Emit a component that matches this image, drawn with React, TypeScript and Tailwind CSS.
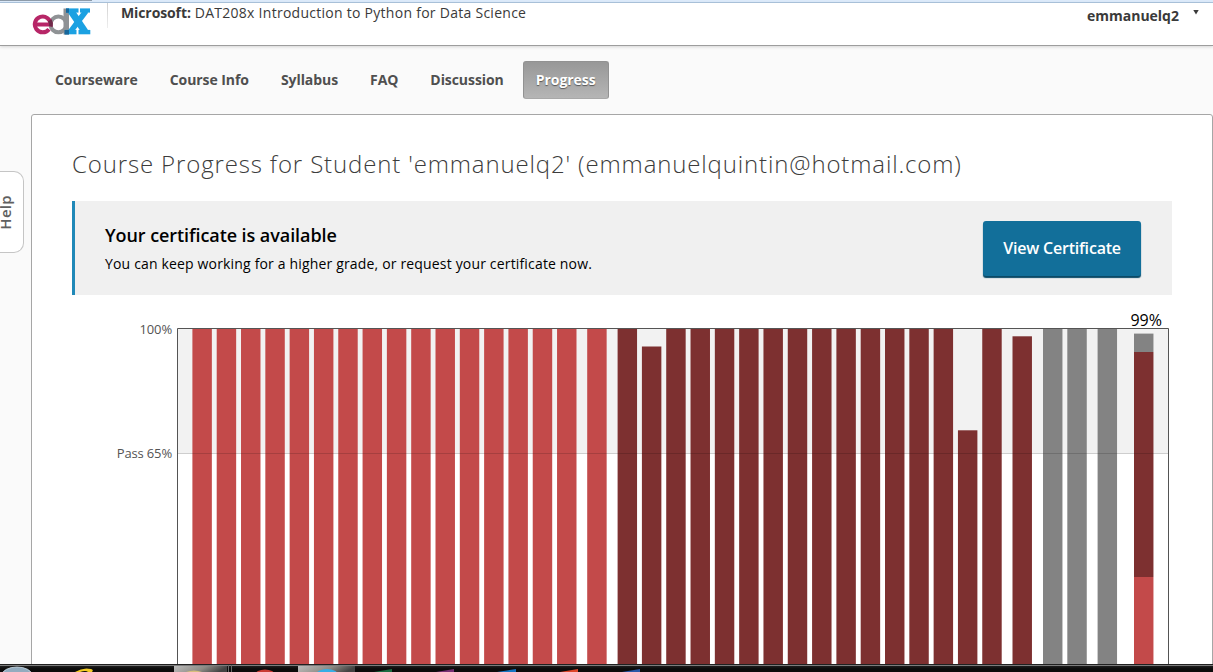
import React from "react";

type Bar = { x: number; top: number; bottom?: number; color: string };

const RED = "#c34a4a";
const MAROON = "#7d3030";
const GRAY = "#838383";
const STEP = 24.31;
const BAR_WIDTH = 19.45;
const CHART_TOP = 328;

const series = (start: number, count: number, color: string): Bar[] =>
  Array.from({ length: count }, (_, i) => ({ x: start + i * STEP, top: 328, color }));

const labs = series(617.6, 16, MAROON).map((bar, i) => ({
  ...bar,
  top: i === 1 ? 346.5 : i === 14 ? 430.3 : 328,
}));

const bars: Bar[] = [
  ...series(192.4, 16, RED),
  { x: 587.2, top: 328, color: RED },
  ...labs,
  { x: 1012.5, top: 336.3, color: MAROON },
  ...series(1043, 2, GRAY),
  { x: 1097.6, top: 328, color: GRAY },
  { x: 1134, top: 333.6, bottom: 352, color: GRAY },
  { x: 1134, top: 352, bottom: 577, color: MAROON },
  { x: 1134, top: 577, color: RED },
];

function Logo() {
  return (
    <svg className="block" width="60" height="28" viewBox="0 0 60 28" aria-label="edX">
      <g fill="none">
        <circle cx="26.4" cy="16.4" r="7.9" stroke="#8f9295" strokeWidth="4" />
        <rect x="31.5" y="0.5" width="5.5" height="26" fill="#8f9295" />
        <path d="M3.4 16.4H18.6A7.9 7.9 0 1 0 17 21.2" stroke="#b72667" strokeWidth="4" />
        <path d="M17.8 12.2A7.9 7.9 0 0 1 18.6 18.4" stroke="#6f2a49" strokeWidth="4" />
      </g>
      <g stroke="#1ba1e2" fill="none">
        <line x1="39" y1="3" x2="53" y2="23.6" strokeWidth="7" />
        <line x1="54" y1="3" x2="38.5" y2="23.6" strokeWidth="5.5" />
        <line x1="34" y1="2.5" x2="46.5" y2="2.5" strokeWidth="4.2" />
        <line x1="48" y1="2.5" x2="58" y2="2.5" strokeWidth="4.2" />
        <line x1="33" y1="24.1" x2="44.5" y2="24.1" strokeWidth="4.4" />
        <line x1="46.5" y1="24.1" x2="58.3" y2="24.1" strokeWidth="4.4" />
      </g>
      <path d="M34 0.5h3v4.2h-3zM32.5 22h4.5v4.4h-4.5z" fill="#17679b" />
    </svg>
  );
}

function Header() {
  return (
    <header className="h-[43px] shrink-0 bg-white border-b border-[#9d9d9d] shadow-[0_1px_3px_rgba(0,0,0,0.15)] flex items-start text-[#3a3a3a] z-10">
      <div className="ml-8 mt-[5px] w-[60px]"><Logo /></div>
      <div className="ml-[15px] w-px h-[25px] bg-linear-to-b from-[#d0d0d0] to-[#eeeeee]" />
      <div className="ml-[13px] text-[14px] leading-5 whitespace-nowrap tracking-[0.27px]">
        <span className="font-bold tracking-[-0.1px]">Microsoft:</span> DAT208x Introduction to Python for Data Science
      </div>
      <div className="ml-auto mt-[3px] text-[14px] leading-5 font-bold">emmanuelq2</div>
      <svg className="ml-[14px] mr-[14px] mt-[7px]" width="6" height="5" viewBox="0 0 6 5">
        <path d="M0.3 0h5.4L3 4.6z" fill="#3a3a3a" />
      </svg>
    </header>
  );
}

function Nav() {
  const tabs = ["Courseware", "Course Info", "Syllabus", "FAQ", "Discussion"];
  return (
    <nav className="h-[68px] shrink-0 pt-[15px] pl-[42px] flex gap-[6px] text-[14px] font-bold tracking-[-0.07px] text-[#4f4f4f]">
      {tabs.map((tab) => (
        <a key={tab} className="h-[38px] px-[13px] leading-[37px]">{tab}</a>
      ))}
      <a className="h-[38px] w-[86px] text-center leading-[35px] rounded-[3px] border border-[#929292] border-b-[#a8a8a8] bg-linear-to-b from-[#989898] to-[#b5b5b5] text-white [text-shadow:0_1px_1px_rgba(0,0,0,0.5)]">
        Progress
      </a>
    </nav>
  );
}

function Certificate() {
  return (
    <section className="ml-10 mr-10 mt-[19px] h-[94px] shrink-0 border-l-3 border-[#2089b8] bg-[#f0f0f0] flex justify-between text-black">
      <div className="pl-[30px] pt-[21px]">
        <h2 className="text-[18px] leading-[26px] font-semibold tracking-[-0.07px]">Your certificate is available</h2>
        <p className="mt-[6px] text-[14px] leading-5 tracking-[0.165px]">You can keep working for a higher grade, or request your certificate now.</p>
      </div>
      <button className="mt-5 mr-[31px] w-[158px] h-[55px] pb-[2px] rounded-[3px] bg-[#126f9a] shadow-[0_2px_1px_#0a4a67] text-white text-[16px] font-semibold tracking-[-0.2px]">
        View Certificate
      </button>
    </section>
  );
}

function Chart() {
  return (
    <section className="mt-[14px] flex h-[356px] shrink-0 text-[13px] leading-5 text-[#545454]">
      <div className="w-[140px] pt-[10px] text-right whitespace-nowrap tracking-[-0.15px]">
        <div>100%</div>
        <div className="mt-[104px]">Pass 65%</div>
      </div>
      <div className="ml-[5px] w-[993px]">
        <div className="h-[18px] pr-[8px] text-right text-[16px] leading-[22px] text-black">99%</div>
        <svg className="block" width="993" height="338" viewBox="177 327 993 338">
          <rect x="178" y="328" width="991" height="126" fill="#f2f2f2" />
          {bars.map((bar, i) => (
            <rect
              key={i}
              x={bar.x}
              y={bar.top}
              width={BAR_WIDTH}
              height={(bar.bottom ?? 665) - bar.top}
              fill={bar.color}
            />
          ))}
          <line x1="178" x2="1168" y1="453.5" y2="453.5" stroke="#000000" strokeOpacity="0.15" />
          <path d={`M177.5 665V${CHART_TOP + 0.5}H1168.5V665`} fill="none" stroke="#545454" />
        </svg>
      </div>
    </section>
  );
}

function Taskbar() {
  return (
    <footer className="h-2 shrink-0 z-10">
      <svg className="block" width="1213" height="8" viewBox="0 664 1213 8">
        <defs>
          <linearGradient id="active" x1="0" x2="1" y1="0" y2="0.2">
            <stop offset="0" stopColor="#bcbcbc" />
            <stop offset="0.6" stopColor="#8e8b85" />
            <stop offset="1" stopColor="#434343" />
          </linearGradient>
          <linearGradient id="shade" x1="0" x2="0" y1="0" y2="1">
            <stop offset="0" stopColor="#2b2b2b" />
            <stop offset="0.6" stopColor="#0b0b0b" />
          </linearGradient>
        </defs>
        <rect x="0" y="664" width="1213" height="8" fill="url(#shade)" />
        <rect x="0" y="664" width="1213" height="1" fill="#202020" />
        <rect x="0" y="665" width="1213" height="1" fill="#7c7c7c" />
        <ellipse cx="17" cy="675" rx="15" ry="8" fill="#93acbf" stroke="#d2dfe9" strokeWidth="0.8" />
        <path d="M75 672Q83 667 91 669Q94 670 92 672H88Q86 670 80 672z" fill="#f2cb27" />
        <path d="M174 672V666H227V672z" fill="url(#active)" />
        <path d="M228.5 672V665M231.5 672V665" stroke="#686868" />
        <path d="M186 672Q194 669 202 672" fill="#d6bd7c" />
        <ellipse cx="265" cy="675" rx="10" ry="5.5" fill="#c93a33" />
        <path d="M298 672V666H355V672z" fill="url(#active)" />
        <ellipse cx="327" cy="675" rx="11" ry="6" fill="#37aee5" />
        <path d="M374 672L392 669V672z" fill="#1c6d43" />
        <path d="M436 672L454 669V672z" fill="#783174" />
        <path d="M497 672L516 669V672z" fill="#1675c2" />
        <path d="M560 672L578 669V672z" fill="#df472b" />
        <path d="M622 672L640 669V672z" fill="#2a57a8" />
      </svg>
    </footer>
  );
}

export default function App() {
  return (
    <div className="w-[1213px] h-[672px] overflow-hidden flex flex-col bg-[#fafafa] font-['Open_Sans','Noto_Sans',sans-serif]">
      <div className="h-[3px] shrink-0 bg-[#dceafa] border-b border-[#adc5de]">
        <div className="w-[92px] h-px bg-[#8d9ba9]" />
      </div>
      <Header />
      <Nav />
      <div className="h-[550px] flex shrink-0 overflow-hidden">
        <aside className="w-[31px] shrink-0 pt-[57px]">
          <div className="w-6 h-[82px] border border-l-0 border-[#c5c5c5] rounded-r-[10px] bg-white flex items-center justify-start">
            <span className="[writing-mode:vertical-rl] rotate-180 text-[15px] leading-[11px] tracking-[0.3px] font-semibold text-[#606060]">Help</span>
          </div>
        </aside>
        <main className="w-[1182px] shrink-0 h-[560px] bg-white border border-[#a6a6a6] rounded-[3px] flex flex-col">
          <h1 className="ml-10 mt-[31px] h-9 text-[24px] leading-9 font-light tracking-[0.86px] text-[#3c3c3c] whitespace-nowrap">
            Course Progress for Student 'emmanuelq2' (emmanuelquintin@hotmail.com)
          </h1>
          <Certificate />
          <Chart />
        </main>
      </div>
      <Taskbar />
    </div>
  );
}
